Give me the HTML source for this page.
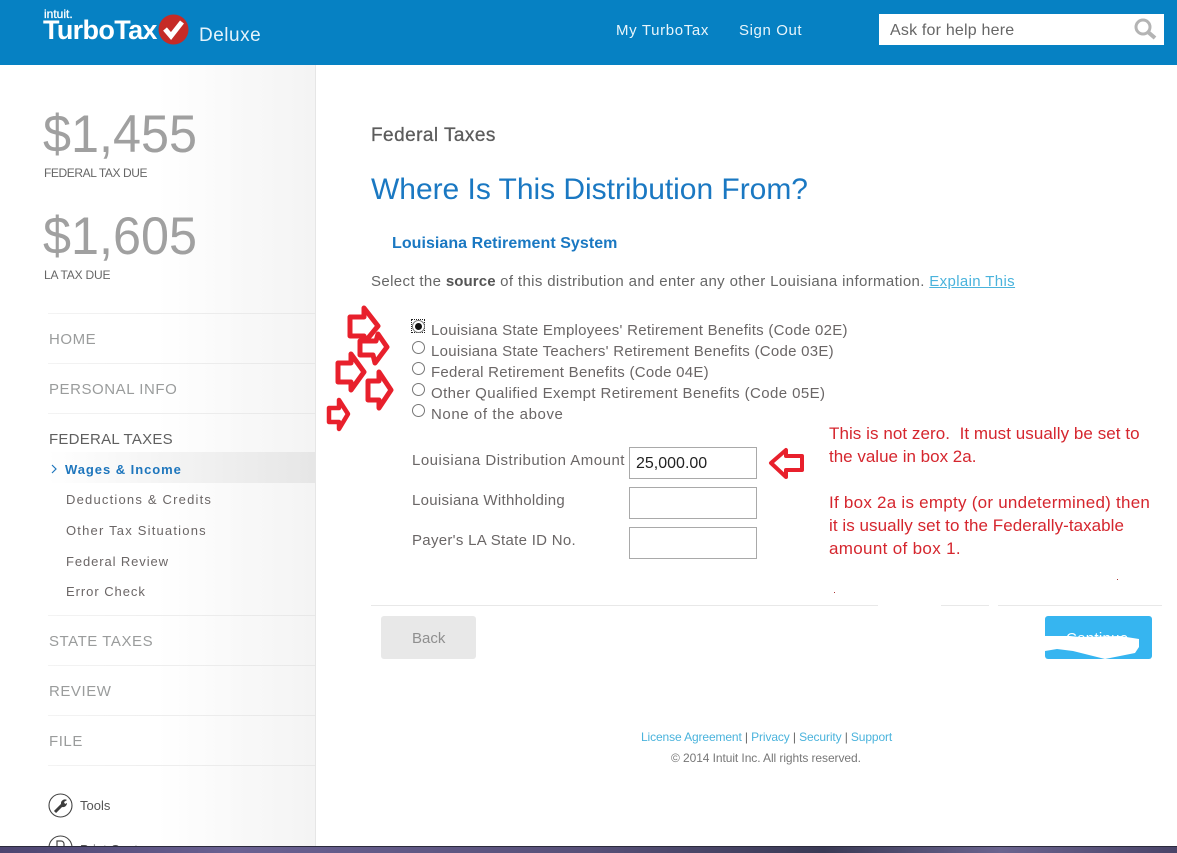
<!DOCTYPE html>
<html>
<head>
<meta charset="utf-8">
<style>
html,body{margin:0;padding:0;background:#fff}
body{position:relative;width:1177px;height:853px;overflow:hidden;font-family:"Liberation Sans",sans-serif;color:#5f5b5b}
.t{position:absolute;white-space:nowrap;line-height:1}
.bar{position:absolute;left:0;top:0;width:1177px;height:65px;background:#0681c3}
.side{position:absolute;left:0;top:65px;width:315px;height:788px;background:linear-gradient(90deg,#fff 0,#fff 50%,#f9f9f9 75%,#f4f4f4 100%);border-right:1px solid #e6e6e6}
.dv{position:absolute;left:48px;width:267px;height:1px;background:linear-gradient(90deg,#f3f3f3,#e8e8e8)}
.nav{font-size:15px;color:#9a9c9c;letter-spacing:.55px}
.sub{font-size:13px;letter-spacing:1.2px;color:#6b6666;left:66px}
.opt{font-size:15px;left:431px;letter-spacing:.27px;color:#6a6666}
.lab{font-size:15px;left:412px;letter-spacing:.5px;color:#6a6666}
.radio{position:absolute;left:412px;width:11px;height:11px;border:1px solid #777;border-radius:50%;background:#fff}
.inp{position:absolute;left:629px;width:126px;height:30px;border:1px solid #a9a9a9;background:#fff}
.red{font-size:17px;color:#d5262e;left:829px}
.hr{position:absolute;top:605px;height:1px;background:#e8e8e8}
.foot{font-size:12px;color:#4ab3dc;letter-spacing:-.12px}
.big{font-size:53px;color:#a0a0a0;transform:scaleX(.95);transform-origin:0 0}
</style>
</head>
<body>
<div class="bar"></div>
<div class="t" style="left:44px;top:8px;font-size:12px;color:#fff;-webkit-text-stroke:.3px #fff">intuit.</div>
<div class="t" style="left:43px;top:17px;font-size:27px;font-weight:bold;color:#fff;letter-spacing:-.65px">TurboTax</div>
<svg style="position:absolute;left:157px;top:13px" width="33" height="33" viewBox="0 0 33 33"><circle cx="16.5" cy="16.5" r="15" fill="#c52b27"/><path d="M8 16l6 7L25 9" fill="none" stroke="#fff" stroke-width="5"/></svg>
<div class="t" style="left:199px;top:26px;font-size:19px;color:#e4f3fb;letter-spacing:.5px">Deluxe</div>
<div class="t" style="left:616px;top:23px;font-size:15px;color:#e8f5fb;letter-spacing:.65px">My TurboTax</div>
<div class="t" style="left:739px;top:23px;font-size:15px;color:#e8f5fb;letter-spacing:.6px">Sign Out</div>
<div style="position:absolute;left:879px;top:14px;width:285px;height:31px;background:#fff"></div>
<div class="t" style="left:890px;top:23px;font-size:16px;color:#666;letter-spacing:.2px">Ask for help here</div>
<svg style="position:absolute;left:1133px;top:17px" width="24" height="24" viewBox="0 0 24 24"><circle cx="10" cy="10" r="7" fill="none" stroke="#b4b4b4" stroke-width="3"/><path d="M15 15l7 6" stroke="#b4b4b4" stroke-width="4"/></svg>

<div class="side"></div>
<div class="t big" style="left:43px;top:108px">$1,455</div>
<div class="t" style="left:44px;top:167px;font-size:12px;color:#666;letter-spacing:-.4px">FEDERAL TAX DUE</div>
<div class="t big" style="left:43px;top:210px">$1,605</div>
<div class="t" style="left:44px;top:269px;font-size:12px;color:#666;letter-spacing:-.2px">LA TAX DUE</div>

<div class="dv" style="top:313px"></div>
<div class="t nav" style="left:49px;top:332px">HOME</div>
<div class="dv" style="top:363px"></div>
<div class="t nav" style="left:49px;top:382px">PERSONAL INFO</div>
<div class="dv" style="top:413px"></div>
<div class="t nav" style="left:49px;top:432px;color:#5f5f5f;letter-spacing:.25px">FEDERAL TAXES</div>
<div style="position:absolute;left:48px;top:452px;width:267px;height:31px;background:linear-gradient(90deg,#fff,#e6e6e6)"></div>
<svg style="position:absolute;left:51px;top:464px" width="7" height="10" viewBox="0 0 7 10"><path d="M1 1l4 4-4 4" fill="none" stroke="#1e76bd" stroke-width="1.2"/></svg>
<div class="t sub" style="top:463px;color:#1e76bd;font-weight:bold;letter-spacing:.95px;left:65px">Wages &amp; Income</div>
<div class="t sub" style="top:493px">Deductions &amp; Credits</div>
<div class="t sub" style="top:524px">Other Tax Situations</div>
<div class="t sub" style="top:555px;letter-spacing:.9px">Federal Review</div>
<div class="t sub" style="top:585px;letter-spacing:.95px">Error Check</div>
<div class="dv" style="top:615px"></div>
<div class="t nav" style="left:49px;top:634px">STATE TAXES</div>
<div class="dv" style="top:665px"></div>
<div class="t nav" style="left:49px;top:684px">REVIEW</div>
<div class="dv" style="top:715px"></div>
<div class="t nav" style="left:49px;top:734px">FILE</div>
<div class="dv" style="top:765px"></div>

<svg style="position:absolute;left:48px;top:793px" width="26" height="26" viewBox="0 0 26 26"><circle cx="12.5" cy="12.5" r="11.5" fill="#fff" stroke="#444" stroke-width="1.1"/><path d="M7 19l7-7" stroke="#3d3d3d" stroke-width="3"/><path d="M13 11a4 4 0 0 1 6-4l-3 2 1 2 2-1a4 4 0 0 1-5 4z" fill="#3d3d3d"/></svg>
<div class="t" style="left:80px;top:799px;font-size:13px;color:#555">Tools</div>
<svg style="position:absolute;left:48px;top:835px" width="26" height="12" viewBox="0 0 26 12"><circle cx="12.5" cy="12.5" r="11.5" fill="#fff" stroke="#444" stroke-width="1.1"/><path d="M9 12V6h4a3 3 0 0 1 3 3v3" fill="none" stroke="#444" stroke-width="1.2"/></svg>
<div style="position:absolute;left:80px;top:835px;width:70px;height:11px;overflow:hidden"><div class="t" style="left:0;top:8px;font-size:13px;color:#555">Print Center</div></div>

<div class="t" style="left:371px;top:126px;font-size:19px;color:#5c5c5c;-webkit-text-stroke:.3px #5c5c5c;letter-spacing:.45px">Federal Taxes</div>
<div class="t" style="left:371px;top:175px;font-size:30px;color:#1a78c2;letter-spacing:-.03px">Where Is This Distribution From?</div>
<div class="t" style="left:392px;top:236px;font-size:16px;font-weight:bold;color:#1a78c2;letter-spacing:.05px">Louisiana Retirement System</div>
<div class="t" style="left:371px;top:274px;font-size:15px;letter-spacing:.36px;color:#666">Select the <b style="color:#555;letter-spacing:.1px">source</b> of this distribution and enter any other Louisiana information. <span style="color:#4ab3dc;text-decoration:underline">Explain This</span></div>

<div style="position:absolute;left:411px;top:319px;width:14px;height:14px;outline:1px dotted #222;outline-offset:-1px"></div>
<div class="radio" style="top:320px"></div>
<div style="position:absolute;left:415px;top:323px;width:7px;height:7px;border-radius:50%;background:#111"></div>
<div class="radio" style="top:341px"></div>
<div class="radio" style="top:362px"></div>
<div class="radio" style="top:383px"></div>
<div class="radio" style="top:404px"></div>
<div class="t opt" style="top:323px">Louisiana State Employees' Retirement Benefits (Code 02E)</div>
<div class="t opt" style="top:344px">Louisiana State Teachers' Retirement Benefits (Code 03E)</div>
<div class="t opt" style="top:365px">Federal Retirement Benefits (Code 04E)</div>
<div class="t opt" style="top:386px;letter-spacing:.41px">Other Qualified Exempt Retirement Benefits (Code 05E)</div>
<div class="t opt" style="top:407px;letter-spacing:.58px">None of the above</div>

<div class="t lab" style="top:453px">Louisiana Distribution Amount</div>
<div class="t lab" style="top:493px;letter-spacing:.3px">Louisiana Withholding</div>
<div class="t lab" style="top:533px;letter-spacing:.3px">Payer's LA State ID No.</div>
<div class="inp" style="top:447px"></div>
<div class="inp" style="top:487px"></div>
<div class="inp" style="top:527px"></div>
<div class="t" style="left:636px;top:456px;font-size:16px;color:#222">25,000.00</div>

<svg style="position:absolute;left:0;top:0" width="1177" height="853" viewBox="0 0 1177 853">
<g fill="#fff" stroke="#e8202c" stroke-width="5" stroke-linejoin="round">
<path d="M350 317h14v-9l14 18-14 17v-7h-14z"/>
<path d="M360 341h16l2-7 9 13-12 16-2-8h-13z"/>
<path d="M338 363h13v-9l13 18-13 18v-8h-13z"/>
<path d="M368 381h11v-9l12 18-12 18v-8h-11z"/>
<path d="M329 408h10v-8l9 14-9 15v-7h-10z" stroke-width="4.5"/>
<path d="M771 463l15-13v6h16v14h-16v7z" stroke-width="4"/>
</g>
</svg>
<div class="t red" style="top:425px;letter-spacing:.06px">This is not zero.&nbsp; It must usually be set to</div>
<div class="t red" style="top:448px">the value in box 2a.</div>
<div class="t red" style="top:494px;letter-spacing:.25px">If box 2a is empty (or undetermined) then</div>
<div class="t red" style="top:517px;letter-spacing:.05px">it is usually set to the Federally-taxable</div>
<div class="t red" style="top:540px;letter-spacing:.33px">amount of box 1.</div>

<div class="hr" style="left:371px;width:507px"></div>
<div class="hr" style="left:941px;width:48px"></div>
<div class="hr" style="left:998px;width:164px"></div>

<div style="position:absolute;left:381px;top:616px;width:95px;height:43px;background:#e8e8e8;border-radius:3px"></div>
<div class="t" style="left:412px;top:631px;font-size:15px;color:#8f8f8f">Back</div>

<div style="position:absolute;left:1045px;top:616px;width:107px;height:43px;background:#36b5f0;border-radius:3px"></div>
<div class="t" style="left:1066px;top:631px;font-size:15px;color:#fff;letter-spacing:.3px">Continue</div>
<svg style="position:absolute;left:1045px;top:616px" width="107" height="44" viewBox="0 0 107 44"><path d="M0 20h25l10 1 40-1 19 3v8l-4 6-20 4-10 2-20-5-12-3-16-2-12 2z" fill="#fff"/></svg>

<div class="t foot" style="left:641px;top:731px">License Agreement <span style="color:#666">|</span> Privacy <span style="color:#666">|</span> Security <span style="color:#666">|</span> Support</div>
<div class="t" style="left:671px;top:752px;font-size:12px;color:#777;letter-spacing:-.08px">© 2014 Intuit Inc. All rights reserved.</div>

<div style="position:absolute;left:834px;top:592px;width:1px;height:1px;background:#a33"></div>
<div style="position:absolute;left:1117px;top:579px;width:1px;height:1px;background:#a33"></div>

<div style="position:absolute;left:0;top:846px;width:1177px;height:1px;background:#2b2a3c"></div>
<div style="position:absolute;left:0;top:847px;width:1177px;height:6px;background:linear-gradient(90deg,#4d4570,#6a6192 20%,#575078 50%,#3a3a55 70%,#6b648f 85%,#4a4468)"></div>
</body>
</html>
